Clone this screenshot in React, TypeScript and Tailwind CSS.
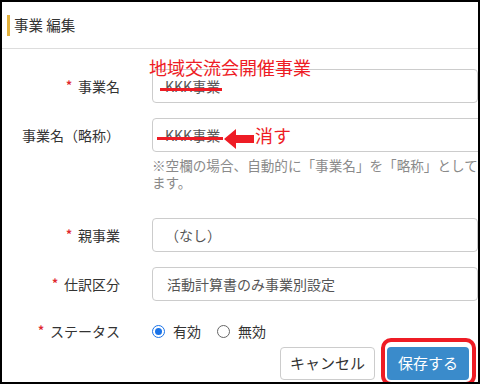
import React from 'react';

const font = { fontFamily: '"Noto Sans CJK JP", "Noto Sans", sans-serif' };

function Req() {
  return <span className="text-[#e0282e] text-[12px] font-bold mr-[6px] relative -top-[2px]">*</span>;
}

function Label({ req, children }: { req?: boolean; children: React.ReactNode }) {
  return (
    <div className="w-[118px] shrink-0 text-right text-[14px] text-[#333]">
      {req && <Req />}
      {children}
    </div>
  );
}

export default function App() {
  return (
    <div className="w-[480px] h-[385px] bg-white" style={font}>
      <div className="relative w-[480px] h-[384px] border-2 border-black overflow-hidden bg-white">
        {/* header */}
        <div className="h-[47px] border-b border-[#dddddd] flex items-center pl-[5px]">
          <div className="w-[3px] h-[21px] bg-[#e2b13c] mr-[4px]" />
          <span className="text-[14.5px] text-[#333] leading-none">事業 編集</span>
        </div>

        <div className="pt-[20px]">
          <div className="flex items-center">
            <Label req>事業名</Label>
            <div className="ml-[32px] w-[360px] h-[34px] border border-[#cccccc] rounded-[4px] flex items-center pl-[12px] text-[14px] text-[#555]">
              KKK事業
            </div>
          </div>

          <div className="flex items-start mt-[15px]">
            <div className="h-[34px] flex items-center">
              <Label>事業名（略称）</Label>
            </div>
            <div className="ml-[32px] w-[372px] shrink-0">
              <div className="w-[360px] h-[34px] border border-[#cccccc] rounded-[4px] flex items-center pl-[12px] text-[14px] text-[#555]">
                KKK事業
              </div>
              <p className="mt-[5px] text-[13.6px] leading-[17px] text-[#8a8a8a]">
                ※空欄の場合、自動的に「事業名」を「略称」として登録します。
              </p>
            </div>
          </div>

          <div className="flex items-center mt-[27px]">
            <Label req>親事業</Label>
            <div className="ml-[32px] w-[360px] h-[34px] border border-[#cccccc] rounded-[4px] flex items-center pl-[12px] text-[14px] text-[#555]">
              （なし）
            </div>
          </div>

          <div className="flex items-center mt-[15px]">
            <Label req>仕訳区分</Label>
            <div className="ml-[32px] w-[360px] h-[34px] border border-[#cccccc] rounded-[4px] flex items-center pl-[14px] text-[14px] text-[#555]">
              活動計算書のみ事業別設定
            </div>
          </div>

          <div className="flex items-center mt-[14px] h-[32px]">
            <Label req>ステータス</Label>
            <div className="ml-[32px] flex items-center text-[14px] text-[#333]">
              <span className="w-[13px] h-[13px] rounded-full border-[1.5px] border-[#1a73e8] flex items-center justify-center mr-[8px]">
                <span className="w-[7px] h-[7px] rounded-full bg-[#1a73e8]" />
              </span>
              有効
              <span className="w-[13px] h-[13px] rounded-full border border-[#666] ml-[16px] mr-[8px]" />
              無効
            </div>
          </div>

          <div className="flex justify-end gap-[12px] pr-[9px]">
            <button className="w-[95px] h-[33px] border border-[#cccccc] rounded-[4px] bg-white text-[15px] text-[#333]">
              キャンセル
            </button>
            <button className="w-[82px] h-[33px] rounded-[4px] bg-[#3a8bcb] text-[15px] text-white">
              保存する
            </button>
          </div>
        </div>

        {/* annotations */}
        <div className="absolute left-[147px] top-[54px] text-[18px] leading-[22px] text-[#ee1c25]">
          地域交流会開催事業
        </div>
        <div className="absolute left-[158px] top-[86px] w-[62px] h-[3px] bg-[#ee1c25]" />
        <div className="absolute left-[155px] top-[135px] w-[66px] h-[3px] bg-[#ee1c25]" />
        <svg className="absolute left-[221px] top-[126px]" width="32" height="22" viewBox="0 0 32 22">
          <path d="M1 11 L13 1 L13 7 L31 7 L31 15 L13 15 L13 21 Z" fill="#ee1c25" />
        </svg>
        <div className="absolute left-[253px] top-[122px] text-[18px] leading-[22px] text-[#ee1c25]">消す</div>
        <div className="absolute left-[379px] top-[336px] w-[95px] h-[48px] border-[4px] border-[#ee1c25] rounded-[10px]" />
      </div>
    </div>
  );
}
